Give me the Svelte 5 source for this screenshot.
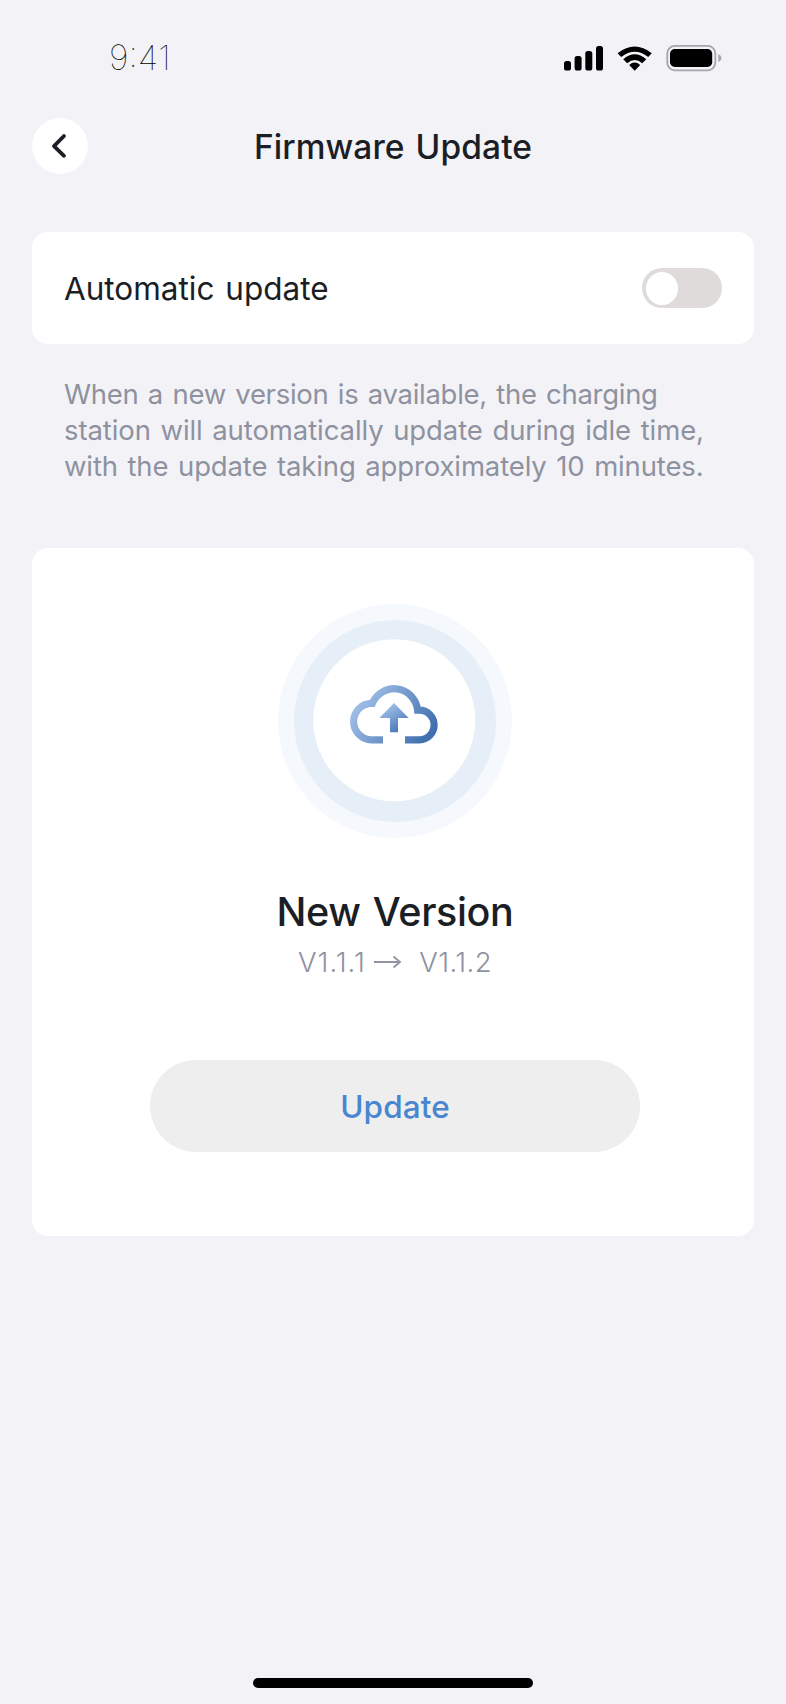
<script>
  let automatic = $state(false);
</script>

<div class="screen">
  <header class="status">
    <span class="time">9:41</span>
    <svg class="indicators" width="162" height="30" viewBox="0 0 162 30" aria-hidden="true">
      <rect x="4" y="18" width="7" height="9.5" rx="2.6" />
      <rect x="14.6" y="13" width="7" height="14.5" rx="2.6" />
      <rect x="25.3" y="8" width="7" height="19.5" rx="2.6" />
      <rect x="36" y="3" width="7" height="24.5" rx="2.6" />
      <path d="M57.6 10.2Q74.7 -3.2 91.8 10.2L88.2 14Q74.7 3.4 61.2 14Z" />
      <path d="M63.2 16.2Q74.7 6.4 86.2 16.2L82.2 20.2Q74.7 14 67.2 20.2Z" />
      <path d="M69.2 22Q74.7 17.2 80.2 22L74.7 27.8Z" />
      <rect x="107.3" y="2.9" width="48" height="24.4" rx="7.5" fill="none" stroke="#a6a5aa" stroke-width="1.8" />
      <rect x="110" y="6" width="42.2" height="18" rx="4.8" />
      <path d="M158.3 11.2Q161.4 12.4 161.4 15.1T158.3 19Z" fill="#a6a5aa" />
    </svg>
  </header>

  <nav>
    <button class="back" aria-label="Back">
      <svg width="56" height="56" viewBox="0 0 56 56"><path d="M32 18L22 28.2L32 37.8" fill="none" stroke="#1b1e24" stroke-width="3.8" stroke-linecap="round" stroke-linejoin="round" /></svg>
    </button>
    <h1>Firmware Update</h1>
  </nav>

  <section class="card setting">
    <span class="label">Automatic update</span>
    <button class="toggle" class:on={automatic} role="switch" aria-checked={automatic} aria-label="Automatic update" onclick={() => (automatic = !automatic)}>
      <span class="knob"></span>
    </button>
  </section>

  <p class="hint">
    <span class="l1">When a new version is available, the charging</span>
    <span class="l2">station will automatically update during idle time,</span>
    <span class="l3">with the update taking approximately 10 minutes.</span>
  </p>

  <section class="card release">
    <svg width="234" height="234" viewBox="278 604 234 234" aria-hidden="true">
      <defs>
        <linearGradient id="cloud" gradientUnits="userSpaceOnUse" x1="360" y1="700" x2="422" y2="744">
          <stop offset="0" stop-color="#a0bee6" />
          <stop offset="1" stop-color="#4070b0" />
        </linearGradient>
        <linearGradient id="arrow" gradientUnits="userSpaceOnUse" x1="385" y1="708" x2="399" y2="731">
          <stop offset="0" stop-color="#a0bee6" />
          <stop offset="1" stop-color="#4a78b8" />
        </linearGradient>
      </defs>
      <circle cx="395" cy="721" r="117" fill="#f5f9fe" />
      <circle cx="395" cy="721" r="101" fill="#e6eff8" />
      <circle cx="394.3" cy="720.2" r="81" fill="#fff" />
      <path d="M383 739.8H372A18.2 18.2 0 0 1 353.6 721.6A18.2 18.2 0 0 1 372.3 703.3A23.6 23.6 0 0 1 417.6 710.2H419.3A14.8 14.8 0 0 1 419.3 739.8H405" fill="none" stroke="url(#cloud)" stroke-width="7.2" />
      <path d="M394 703L408.7 718H398V732.3H390V718H379.3Z" fill="url(#arrow)" />
    </svg>
    <h2>New Version</h2>
    <div class="versions">
      <span class="from">V1.1.1</span>
      <svg width="28" height="14" viewBox="0 0 28 14"><path d="M0 7H26M19.5 1.5L26 7L19.5 12.5" fill="none" stroke="#9094a3" stroke-width="1.8" /></svg>
      <span class="to">V1.1.2</span>
    </div>
    <button class="update">Update</button>
  </section>

  <footer><div class="home"></div></footer>
</div>

<style>
  :global(body) { background: #f3f2f7; }
  .screen {
    box-sizing: border-box;
    width: 786px;
    height: 1704px;
    padding: 0 32px;
    display: flex;
    flex-direction: column;
    background: #f3f2f7;
    font-family: Inter, "Liberation Sans", sans-serif;
    color: #1b1e24;
    overflow: hidden;
  }
  button { border: 0; padding: 0; font: inherit; cursor: pointer; }
  .status {
    height: 118px;
    display: flex;
    justify-content: space-between;
    padding: 0 32px 0 77px;
    box-sizing: border-box;
  }
  .indicators { margin-top: 43px; }
  .time {
    margin-top: 38px;
    line-height: 40px;
    font-size: 34.5px;
    font-weight: 100;
    color: #000;
    letter-spacing: 0;
  }
  nav {
    display: grid;
    grid-template-columns: 56px 1fr 56px;
    align-items: center;
    height: 56px;
  }
  .back { width: 56px; height: 56px; border-radius: 50%; background: #fff; }
  .back svg { display: block; }
  h1 {
    margin: 2px 0 0;
    text-align: center;
    white-space: nowrap;
    font-size: 33.5px;
    line-height: 40px;
    font-weight: 500;
    letter-spacing: 0.08px;
    word-spacing: 2px;
  }
  .card { background: #fff; border-radius: 16px; }
  .setting {
    margin-top: 58px;
    height: 112px;
    box-sizing: border-box;
    padding: 0 32px;
    display: flex;
    align-items: center;
    justify-content: space-between;
  }
  .label { margin-top: 2px; font-size: 31.5px; line-height: 40px; letter-spacing: 0; word-spacing: 2px; }
  .toggle {
    width: 80px;
    height: 40px;
    padding: 4px;
    box-sizing: border-box;
    border-radius: 20px;
    background: #e0dbdb;
    display: flex;
    align-items: center;
  }
  .toggle.on { justify-content: flex-end; background: #4a86d0; }
  .knob { width: 32px; height: 33px; border-radius: 50%; background: #fff; }
  .hint {
    margin: 32px 0 0;
    padding-left: 32px;
    height: 172px;
    font-size: 27.5px;
    line-height: 36px;
    color: #8e92a0;
    white-space: nowrap;
  }
  .hint span { display: block; word-spacing: 2px; }
  .hint .l1 { letter-spacing: -0.3px; }
  .hint .l2 { letter-spacing: -0.09px; }
  .hint .l3 { letter-spacing: -0.13px; }
  .release {
    height: 688px;
    box-sizing: border-box;
    padding: 56px 0 0 4px;
    display: flex;
    flex-direction: column;
    align-items: center;
  }
  .release > svg { flex: none; }
  h2 {
    margin: 50px 0 0;
    font-size: 39.5px;
    line-height: 48px;
    font-weight: 500;
    letter-spacing: -0.35px;
    word-spacing: 2px;
  }
  .versions {
    margin-top: 8px;
    height: 36px;
    display: flex;
    align-items: center;
    font-size: 27.5px;
    line-height: 36px;
    font-weight: 300;
    color: #8e92a0;
  }
  .versions .from { letter-spacing: 1px; }
  .versions .to { letter-spacing: 0.4px; }
  .versions svg { margin: 0 17px 0 8.5px; }
  .update {
    margin-top: 80px;
    width: 490px;
    height: 92px;
    border-radius: 46px;
    background: #eee;
    color: #4a86d0;
    font-size: 31.5px;
    font-weight: 450;
    letter-spacing: 0.1px;
  }
  footer { margin-top: auto; height: 26px; display: flex; justify-content: center; }
  .home { width: 280px; height: 10px; border-radius: 5px; background: #000; }
</style>
